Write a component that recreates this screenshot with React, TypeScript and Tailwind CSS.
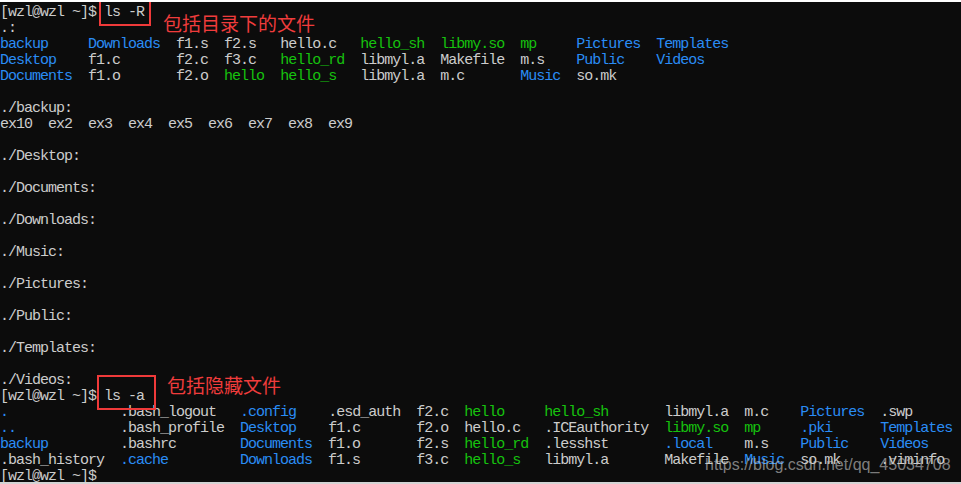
import React from "react";

type Seg = { t: string; c?: "b" | "g" };
type Line = Seg[] | string;

const B = (t: string): Seg => ({ t, c: "b" });
const G = (t: string): Seg => ({ t, c: "g" });
const W = (t: string): Seg => ({ t });

function cols(items: Seg[], positions: number[]): Seg[] {
  const out: Seg[] = [];
  let cur = 0;
  items.forEach((s, i) => {
    const p = positions[i];
    if (p > cur) out.push({ t: " ".repeat(p - cur) });
    out.push(s);
    cur = p + s.t.length;
  });
  return out;
}

const P1 = [0, 11, 22, 28, 35, 45, 55, 65, 72, 82];
const P2 = [0, 15, 30, 41, 52, 58, 68, 83, 93, 100, 110];

const lines: Line[] = [
  "[wzl@wzl ~]$ ls -R",
  ".:",
  cols([B("backup"), B("Downloads"), W("f1.s"), W("f2.s"), W("hello.c"), G("hello_sh"), G("libmy.so"), G("mp"), B("Pictures"), B("Templates")], P1),
  cols([B("Desktop"), W("f1.c"), W("f2.c"), W("f3.c"), G("hello_rd"), W("libmyl.a"), W("Makefile"), W("m.s"), B("Public"), B("Videos")], P1),
  cols([B("Documents"), W("f1.o"), W("f2.o"), G("hello"), G("hello_s"), W("libmyl.a"), W("m.c"), B("Music"), W("so.mk")], P1),
  "",
  "./backup:",
  "ex10  ex2  ex3  ex4  ex5  ex6  ex7  ex8  ex9",
  "",
  "./Desktop:",
  "",
  "./Documents:",
  "",
  "./Downloads:",
  "",
  "./Music:",
  "",
  "./Pictures:",
  "",
  "./Public:",
  "",
  "./Templates:",
  "",
  "./Videos:",
  "[wzl@wzl ~]$ ls -a",
  cols([B("."), W(".bash_logout"), B(".config"), W(".esd_auth"), W("f2.c"), G("hello"), G("hello_sh"), W("libmyl.a"), W("m.c"), B("Pictures"), W(".swp")], P2),
  cols([B(".."), W(".bash_profile"), B("Desktop"), W("f1.c"), W("f2.o"), W("hello.c"), W(".ICEauthority"), G("libmy.so"), G("mp"), B(".pki"), B("Templates")], P2),
  cols([B("backup"), W(".bashrc"), B("Documents"), W("f1.o"), W("f2.s"), G("hello_rd"), W(".lesshst"), B(".local"), W("m.s"), B("Public"), B("Videos")], P2),
  cols([W(".bash_history"), B(".cache"), B("Downloads"), W("f1.s"), W("f3.c"), G("hello_s"), W("libmyl.a"), W("Makefile"), B("Music"), W("so.mk"), W(".viminfo")], P2),
  "[wzl@wzl ~]$",
];

function Seg_({ s }: { s: Seg }) {
  if (s.c === "b") return <span className="text-[#2a8cf5]">{s.t}</span>;
  if (s.c === "g") return <span className="text-[#16c20e]">{s.t}</span>;
  return <span>{s.t}</span>;
}

export default function App() {
  return (
    <div className="relative w-[961px] h-[484px] overflow-hidden bg-[#0c0c0c] border-t-2 border-t-white border-b-2 border-b-[#d4d4d4]">
      <div
        className="pt-[3px] text-[15px] leading-[16px] tracking-[-1px] text-[#cccccc] whitespace-pre"
        style={{ fontFamily: '"Liberation Mono", "DejaVu Sans Mono", monospace' }}
      >
        {lines.map((l, i) => (
          <div key={i} className="h-[16px]">
            {typeof l === "string" ? l || " " : l.map((s, j) => <Seg_ key={j} s={s} />)}
          </div>
        ))}
      </div>

      {/* annotation 1 */}
      <div className="absolute left-[99px] top-[-2px] w-[52px] h-[26px] border-2 border-[#f03a3a]" />
      <div
        className="absolute left-[163px] top-[10px] text-[19px] leading-[22px] text-[#f03c3c] whitespace-nowrap"
        style={{ fontFamily: '"Noto Sans CJK SC", "Noto Sans", sans-serif' }}
      >
        包括目录下的文件
      </div>

      {/* annotation 2 */}
      <div className="absolute left-[97px] top-[373px] w-[59px] h-[35px] border-2 border-[#f03a3a]" />
      <div
        className="absolute left-[167px] top-[372px] text-[19px] leading-[22px] text-[#f03c3c] whitespace-nowrap"
        style={{ fontFamily: '"Noto Sans CJK SC", "Noto Sans", sans-serif' }}
      >
        包括隐藏文件
      </div>

      {/* watermark */}
      <div
        className="absolute left-[705px] top-[453px] text-[16px] leading-[20px] text-[rgba(200,200,200,0.62)] whitespace-nowrap"
        style={{ fontFamily: '"Liberation Sans", Arial, sans-serif' }}
      >
        https://blog.csdn.net/qq_45034708
      </div>
    </div>
  );
}
